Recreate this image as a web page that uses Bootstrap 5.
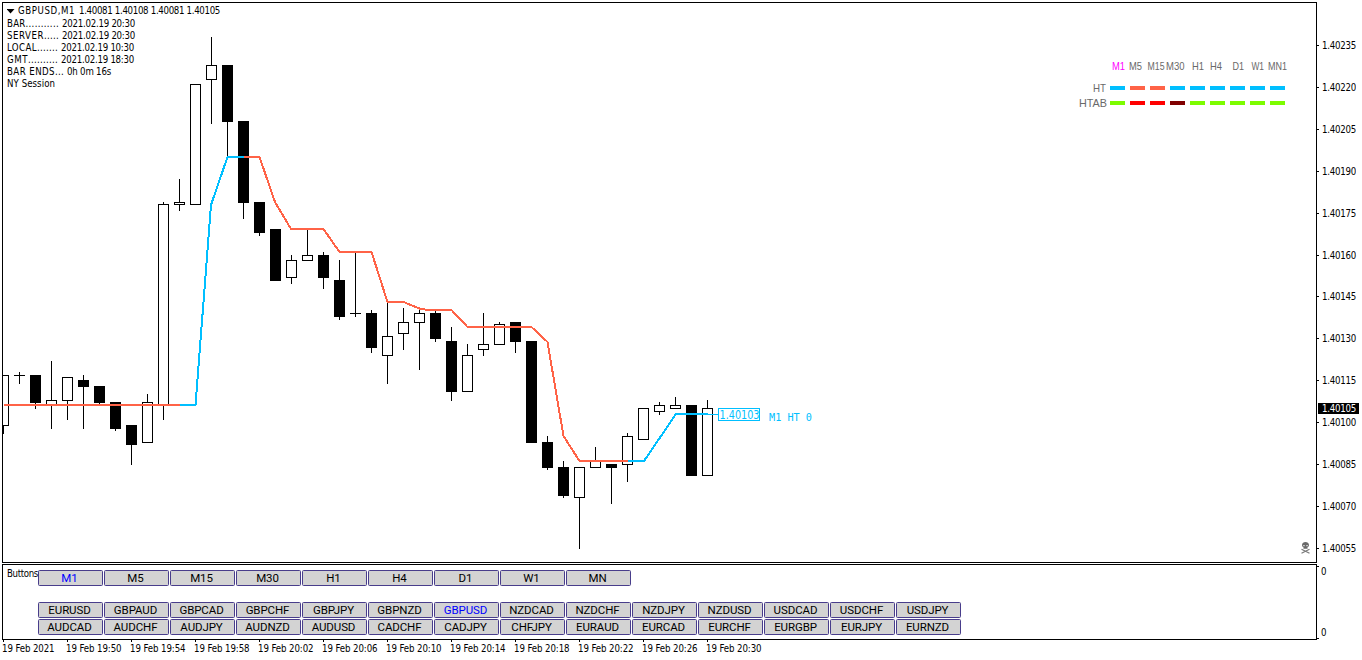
<!DOCTYPE html>
<html lang="en">
<head>
  <meta charset="UTF-8" />
  <meta name="viewport" content="width=device-width, initial-scale=1.0"/>
  <title>GBPUSD,M1</title>
  <link rel="stylesheet" href="https://cdn.jsdelivr.net/npm/bootstrap@5.3.2/dist/css/bootstrap.min.css"/>
  <style>
    body {
      font-family: "DejaVu Sans Condensed", "DejaVu Sans", sans-serif;
      font-stretch: condensed;
      font-size: 9.6px;
      line-height: 12px;
      color: #000;
      background: #fff;
      width: 1362px;
      height: 660px;
      overflow: hidden;
      padding: 2px 0 0 2px;
    }
    .fit { white-space: pre; display: inline-block; }
    .plot-area {
      width: 1315px;
      height: 561px;
      border: 1px solid #000;
      margin-bottom: 1px;
    }
    .plot-area svg { position: absolute; left: -3px; top: -3px; }
    .info { top: 2px; left: 4px; }
    .info-title { padding-left: 11px; height: 13px; }
    .plot-area .info-title svg { left: 0; top: 0; }
    .info-line { height: 12px; }
    .price-axis { width: 45px; height: 561px; padding-top: 22px; }
    .price-tick { height: 41.92px; padding-top: 16px; padding-left: 5px; position: relative; }
    .price-tick::before {
      content: "";
      position: absolute;
      left: 0;
      top: 21px;
      width: 2px;
      height: 1px;
      background: #000;
    }
    .price-now {
      left: 1px;
      top: 401px;
      width: 41px;
      height: 11px;
      line-height: 12px;
      padding-left: 4px;
      background: #000;
      color: #fff;
    }
    .button-panel {
      width: 1315px;
      height: 76px;
      border: 1px solid #000;
      padding: 5px 0 0 35px;
    }
    .panel-name { left: 4px; top: 3px; }
    .key-row { gap: 1px; height: 16px; }
    .key-row .btn {
      width: 65px;
      height: 16px;
      padding: 0 2px 0 0;
      border: 1px solid #483d8b;
      border-radius: 1.5px;
      background: #d3d3d3;
      color: #000;
      font: 11.5px/15px Roboto, sans-serif;
      letter-spacing: -.1px;
    }
    .key-row.lower { margin-top: 1px; }
    .key-row .btn.current { color: #00f; }
    .sub-axis { width: 45px; height: 76px; padding: 2px 0 1px 4px; position: relative; }
    .sub-axis::before, .sub-axis::after {
      content: "";
      position: absolute;
      left: 0;
      width: 2px;
      height: 1px;
      background: #000;
    }
    .sub-axis::before { top: 2px; }
    .sub-axis::after { bottom: 1px; }
    .time-tick { width: 64px; padding-top: 3px; position: relative; }
    .time-tick::before {
      content: "";
      position: absolute;
      left: 1px;
      top: 0;
      width: 1px;
      height: 2px;
      background: #000;
    }
  </style>
</head>
<body>

<div class="d-flex">
  <div class="plot-area position-relative flex-shrink-0">
    <svg id="chart" width="1319" height="565" shape-rendering="crispEdges"></svg>
    <div class="info position-absolute">
      <div class="info-title position-relative">
        <svg width="10" height="12"><path d="M-.5 4h8l-4 4.500z"/></svg>
        <span class="fit" data-w="57">GBPUSD,M1</span><span class="fit ms-1" data-w="141">1.40081 1.40108 1.40081 1.40105</span>
      </div>
      <div id="info-lines"></div>
    </div>
  </div>
  <div class="price-axis position-relative" id="price-axis">
    <div class="price-now position-absolute"><span class="fit" data-w="34">1.40105</span></div>
  </div>
</div>

<div class="d-flex">
  <div class="button-panel position-relative flex-shrink-0">
    <span class="panel-name position-absolute fit" data-w="31">Buttons</span>
    <div class="key-row d-flex mb-3" data-keys="M1 M5 M15 M30 H1 H4 D1 W1 MN"></div>
    <div class="key-row d-flex" data-keys="EURUSD GBPAUD GBPCAD GBPCHF GBPJPY GBPNZD GBPUSD NZDCAD NZDCHF NZDJPY NZDUSD USDCAD USDCHF USDJPY"></div>
    <div class="key-row lower d-flex" data-keys="AUDCAD AUDCHF AUDJPY AUDNZD AUDUSD CADCHF CADJPY CHFJPY EURAUD EURCAD EURCHF EURGBP EURJPY EURNZD"></div>
  </div>
  <div class="sub-axis d-flex flex-column justify-content-between">
    <span>0</span><span>0</span>
  </div>
</div>

<div class="d-flex" id="time-axis"></div>

<script src="https://cdn.jsdelivr.net/npm/bootstrap@5.3.2/dist/js/bootstrap.bundle.min.js"></script>
<script>
  // one bar every 16px: high, body top, body bottom, low, falling
  const bars = [
    [375,375,425,433,0],[372,375,375,383,0],[375,375,402,408,1],[361,400,404,428,0],
    [377,377,400,419,0],[375,380,386,428,1],[386,386,402,403,1],[402,402,428,430,1],
    [425,425,444,464,1],[394,402,442,442,0],[202,204,405,419,0],[179,202,204,210,0],
    [84,84,204,204,0],[37,65,79,123,0],[65,65,121,156,1],[121,121,202,218,1],
    [202,202,232,235,1],[229,229,280,280,1],[255,260,277,283,0],[229,255,260,260,0],
    [252,255,277,288,1],[260,280,316,319,1],[252,313,313,316,0],[310,313,347,352,1],
    [302,336,355,383,0],[308,322,333,349,0],[310,313,322,369,0],[310,313,338,341,1],
    [327,341,391,400,1],[344,355,391,391,0],[313,344,349,355,0],[322,324,344,344,0],
    [322,322,341,352,1],[341,341,442,442,1],[436,442,467,469,1],[461,467,495,497,1],
    [467,467,497,548,0],[447,461,467,467,0],[464,464,467,503,1],[433,436,464,481,0],
    [408,408,439,439,0],[402,405,411,414,0],[397,405,408,408,0],[405,405,475,475,1],
    [400,408,475,475,0]
  ];

  const trend = [
    ['#ff6347', '4,405 180,405'],
    ['#00bfff', '180,405 195.5,405 211,205 227.500,157 244,157'],
    ['#ff6347', '244,157 259.500,157 275,202 291,229 323.500,229 339.500,252 371.500,252 387.500,302 403.500,302 419.500,308.5 428,310 451.500,310 467.500,327 531.500,327 547.500,342 563.500,436 579.500,461 628,461'],
    ['#00bfff', '628,461 644,461 676,414 708,414']
  ];

  // label, x, width
  const frames = [['M1',1112,13],['M5',1129,13],['M15',1147.5,17],['M30',1166,18.5],['H1',1192,12],['H4',1210,12],['D1',1232.5,11.5],['W1',1251.500,12.5],['MN1',1268,19]];
  const signals = [
    ['HT', 1093, 13, 86, ['#00bfff','#ff6347','#ff6347','#00bfff','#00bfff','#00bfff','#00bfff','#00bfff','#00bfff']],
    ['HTAB', 1079, 28, 101, ['#7cfc00','#f00','#f00','#800000','#7cfc00','#7cfc00','#7cfc00','#7cfc00','#7cfc00']]
  ];

  const label = (text, x, y, w, color, size, font) =>
    `<text x="${x}" y="${y}" textLength="${w}" lengthAdjust="spacingAndGlyphs" fill="${color}" font-size="${size}" font-family="${font}, sans-serif">${text}</text>`;

  let svg = '';
  bars.forEach(([high, top, bottom, low, down], i) => {
    const x = 3 + i * 16;
    const left = Math.max(x - 5, 2);
    svg += `<rect x="${x}" y="${high}" width="1" height="${low - high + 1}"/>`;
    svg += `<rect x="${left}" y="${top}" width="${x + 6 - left}" height="${bottom - top + 1}"/>`;
    if (!down && bottom > top) {
      svg += `<rect x="${left + 1}" y="${top + 1}" width="${x + 4 - left}" height="${bottom - top - 1}" fill="#fff"/>`;
    }
  });
  trend.forEach(([color, points]) => {
    svg += `<polyline points="${points}" fill="none" stroke="${color}" stroke-width="2"/>`;
  });

  // price tag at the end of the trend line
  svg += '<path d="M708 414.5h10M718.5 408.5h41v12h-41z" fill="none" stroke="#00bfff"/>';
  svg += label('1.40103', 719.5, 419, 40, '#00bfff', 11.5, 'DejaVu Sans');
  svg += label('M1 HT 0', 769, 421, 43, '#00bfff', 10, 'DejaVu Sans Mono');

  frames.forEach(([name, x, w], i) => {
    svg += label(name, x, 70, w, i ? '#696969' : '#f0f', 10.2, 'Liberation Sans');
  });
  signals.forEach(([name, x, w, y, colors]) => {
    svg += label(name, x, y + 6, w, '#696969', 10.2, 'Liberation Sans');
    colors.forEach((c, i) => {
      svg += `<rect x="${1110 + i * 20}" y="${y}" width="15" height="4" fill="${c}"/>`;
    });
  });

  // skull and crossbones
  svg += `<g shape-rendering="auto" fill="#696969"><path d="M1302 545c0-4 7-4 7 0 0 1.300-.7 1.900-1.500 2.200v1.500h-4v-1.500c-.8-.3-1.500-.9-1.500-2.200z"/>
    <path d="M1303.200 545h1.500v1.200h-1.500zM1306.300 545h1.500v1.200h-1.500z" fill="#ddd"/>
    <path d="M1301.500 549.300l8 4M1309.500 549.300l-8 4" stroke="#777" stroke-width="1.200"/></g>`;
  document.getElementById('chart').innerHTML = svg;

  const info = [
    ['BAR', 18.5, '...........', 33.5, 3, '2021.02.19 20:30', 73],
    ['SERVER', 37, '.....', 15, 3, '2021.02.19 20:30', 73],
    ['LOCAL', 30, '.......', 21, 3, '2021.02.19 10:30', 73],
    ['GMT', 21, '..........', 30, 3, '2021.02.19 18:30', 73],
    ['BAR ENDS', 48, '...', 9, 3, '0h 0m 16s', 44],
    ['NY Session', 48]
  ];
  document.getElementById('info-lines').innerHTML = info.map(([a, aw, dots, dw, gap, b, bw]) =>
    `<div class="info-line d-flex"><span class="fit" data-w="${aw}">${a}</span>` +
    (dots ? `<span class="fit" data-w="${dw}">${dots}</span><span class="fit" data-w="${gap}"> </span><span class="fit" data-w="${bw}">${b}</span>` : '') +
    '</div>').join('');

  const axis = document.getElementById('price-axis');
  for (let p = 140235; p >= 140055; p -= 15) {
    axis.insertAdjacentHTML('beforeend', `<div class="price-tick"><span class="fit" data-w="34">${(p / 100000).toFixed(5)}</span></div>`);
  }

  const times = ['2021','19:50','19:54','19:58','20:02','20:06','20:10','20:14','20:18','20:22','20:26','20:30'];
  document.getElementById('time-axis').innerHTML = times.map((t, i) =>
    `<div class="time-tick"><span class="fit" data-w="${i ? 55.5 : 52.5}">19 Feb ${t}</span></div>`).join('');

  document.querySelectorAll('.key-row').forEach(row => {
    row.innerHTML = row.dataset.keys.split(' ').map(k =>
      `<button class="btn${k === 'M1' || k === 'GBPUSD' ? ' current' : ''}">${k}</button>`).join('');
  });

  // track each label to its slot width
  document.querySelectorAll('.fit').forEach(el => {
    const natural = el.getBoundingClientRect().width;
    el.style.letterSpacing = (el.dataset.w - natural) / el.textContent.length + 'px';
  });
</script>
</body>
</html>
